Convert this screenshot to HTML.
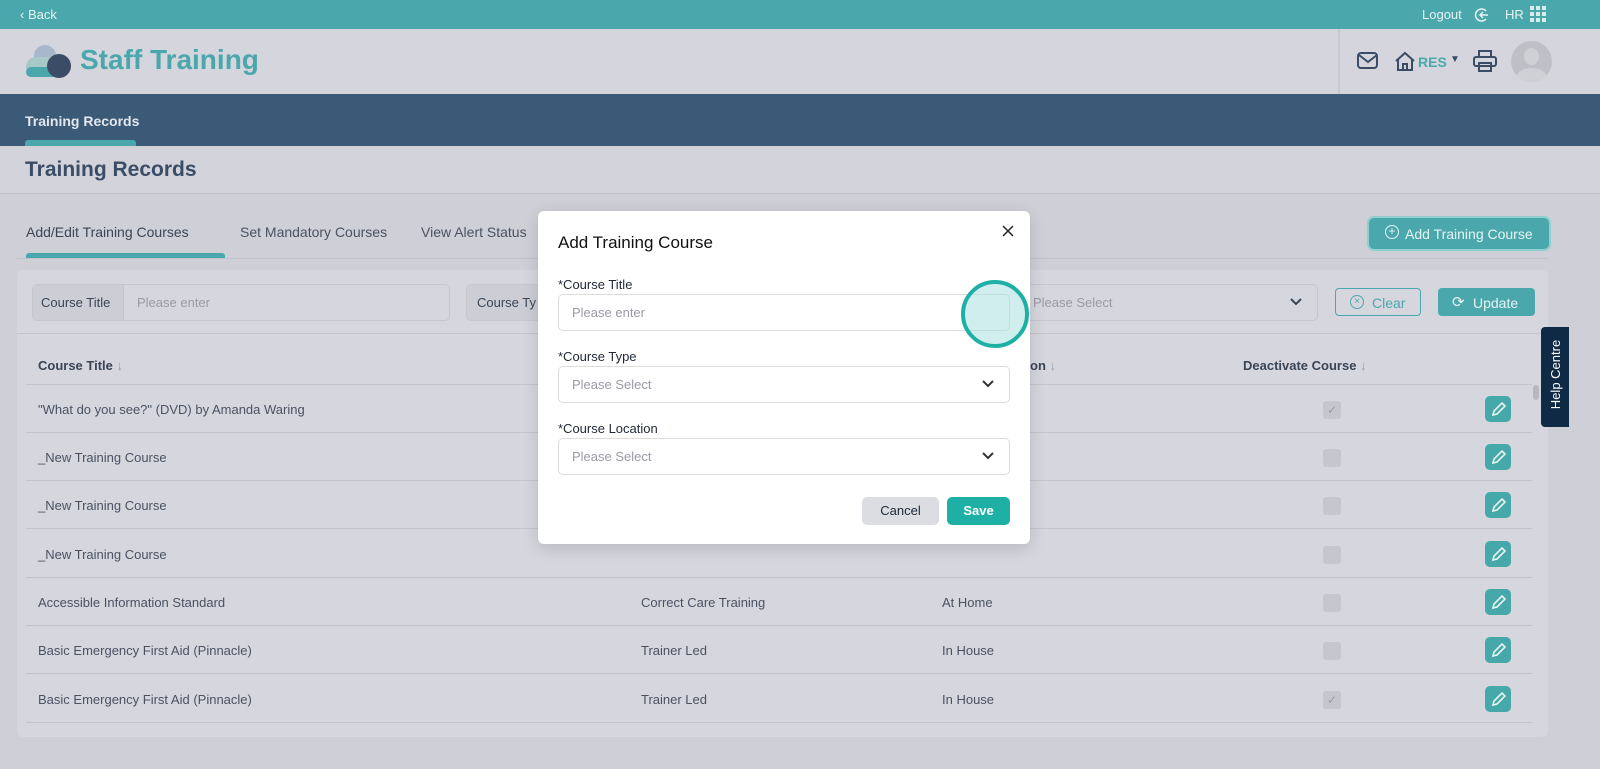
<!DOCTYPE html>
<html><head><meta charset="utf-8"><style>
*{box-sizing:border-box;margin:0;padding:0}
body{width:1600px;height:769px;overflow:hidden;background:#cfcfd7;font-family:"Liberation Sans",sans-serif;position:relative;color:#3a4556}
.abs{position:absolute}
.top{left:0;top:0;width:1600px;height:29px;background:#4aa8ac;color:#e8f3f3;font-size:13px}
.hdr{left:0;top:29px;width:1600px;height:65px;background:#d5d5dd}
.nav{left:0;top:94px;width:1600px;height:52px;background:#3b5a78}
.band{left:0;top:146px;width:1600px;height:48px;background:#d3d3db;border-bottom:1px solid #c2c2cc}
.card{left:17px;top:270px;width:1531px;height:467px;background:#d6d6de;border-radius:6px}
.row{left:26px;width:1506px;height:48px;border-bottom:1px solid #c4c4ce;font-size:13px;color:#4a5262}
.row span{position:absolute;top:17px}
.cb{position:absolute;left:1297px;top:16px;width:18px;height:18px;background:#c6c6cf;border-radius:3px;color:#9a9aa5;font-size:12px;text-align:center;line-height:18px}
.ed{position:absolute;left:1459px;top:11px;width:26px;height:26px;background:#46a8a9;border-radius:5px}
.modal{left:538px;top:211px;width:492px;height:333px;background:#fff;border-radius:6px;box-shadow:0 4px 16px rgba(0,0,0,.15)}
.lbl{position:absolute;left:20px;font-size:13px;color:#1f2937}
.inp{position:absolute;left:20px;width:452px;height:37px;border:1px solid #dcdcdc;border-radius:5px;font-size:13px;color:#9a9aa5;padding:10px 13px}
.chev{position:absolute;right:14px;top:12px}
</style></head><body>
<div class="abs top"><span class="abs" style="left:20px;top:7px">‹ Back</span>
<span class="abs" style="left:1422px;top:7px">Logout</span>
<svg class="abs" style="left:1474px;top:7px" width="16" height="16" viewBox="0 0 16 16" fill="none" stroke="#e8f3f3" stroke-width="1.5"><path d="M12 4A6 6 0 1 0 12 12"/><path d="M6 8h8M9 5l-3 3 3 3"/></svg>
<span class="abs" style="left:1505px;top:7px">HR</span>
<div class="abs" style="left:1530px;top:6px;width:16px;height:16px;background:repeating-linear-gradient(90deg,#d8ecec 0 4px,transparent 4px 6px);-webkit-mask:repeating-linear-gradient(#000 0 4px,transparent 4px 6px)"></div></div>
<div class="abs hdr">
<svg class="abs" style="left:24px;top:14px" width="48" height="36"><circle cx="21" cy="13" r="11" fill="#a7b8cc"/><rect x="2" y="14" width="36" height="20" rx="10" fill="#a9c9c9"/><rect x="2" y="24" width="36" height="10" rx="5" fill="#4aa8ac"/><circle cx="35" cy="23" r="12" fill="#3b4d66"/></svg>
<span class="abs" style="left:80px;top:15px;font-size:28px;font-weight:bold;color:#4aa8ac">Staff Training</span>
<div class="abs" style="left:1338px;top:0;width:2px;height:65px;background:#c8c8d0"></div>
<svg class="abs" style="left:1357px;top:22px" width="22" height="20" fill="none" stroke="#3b4d66" stroke-width="2"><rect x="1" y="2" width="19" height="15" rx="3"/><path d="M2 4l9 7 9-7"/></svg>
<svg class="abs" style="left:1394px;top:21px" width="22" height="22" fill="none" stroke="#3b4d66" stroke-width="2"><path d="M2 11L11 3l9 8M4 9v11h14V9M9 20v-6h4v6"/></svg>
<span class="abs" style="left:1418px;top:25px;font-size:14px;font-weight:bold;color:#4aa8ac">RES</span>
<span class="abs" style="left:1450px;top:25px;font-size:10px;color:#3b4d66">▼</span>
<svg class="abs" style="left:1473px;top:21px" width="24" height="22" fill="none" stroke="#3b4d66" stroke-width="2"><rect x="6" y="1" width="12" height="6"/><rect x="1" y="7" width="22" height="9" rx="2"/><rect x="6" y="13" width="12" height="8"/></svg>
<div class="abs" style="left:1511px;top:12px;width:41px;height:41px;border-radius:50%;background:#bfbfc7;overflow:hidden"><div class="abs" style="left:13px;top:7px;width:15px;height:17px;border-radius:50%;background:#cfcfd6"></div><div class="abs" style="left:5px;top:27px;width:31px;height:20px;border-radius:50%;background:#cfcfd6"></div></div>
</div>
<div class="abs nav"><span class="abs" style="left:25px;top:19px;color:#e3e7ee;font-size:14px;font-weight:bold">Training Records</span><div class="abs" style="left:25px;top:46px;width:111px;height:6px;background:#4aa8ac;border-radius:3px 3px 0 0"></div></div>
<div class="abs band"><span class="abs" style="left:25px;top:12px;font-size:21px;font-weight:bold;color:#3b4d66">Training Records</span></div>
<div class="abs" style="left:26px;top:224px;font-size:14px;color:#3a4556">Add/Edit Training Courses</div>
<div class="abs" style="left:240px;top:224px;font-size:14px;color:#4a5262">Set Mandatory Courses</div>
<div class="abs" style="left:421px;top:224px;font-size:14px;color:#4a5262">View Alert Status</div>
<div class="abs" style="left:26px;top:253px;width:199px;height:5px;background:#4aa8ac;border-radius:3px 3px 0 0"></div>
<div class="abs" style="left:17px;top:258px;width:1531px;height:1px;background:#c2c2cc"></div>
<div class="abs" style="left:1369px;top:218px;width:180px;height:31px;border-radius:5px;background:#4aa8ac;box-shadow:0 0 0 2px #8fcfcf;color:#e8f4f4;font-size:14px;padding:8px 0 0 36px">Add Training Course<span class="abs" style="left:16px;top:7px;width:14px;height:14px;border:1.5px solid #e8f4f4;border-radius:50%;font-size:12px;line-height:11px;text-align:center">+</span></div>
<div class="abs card"></div>
<div class="abs" style="left:32px;top:284px;width:418px;height:37px;border:1px solid #c6c6cf;border-radius:5px;font-size:13px"><div class="abs" style="left:0;top:0;width:91px;height:35px;background:#cdcdd5;border-right:1px solid #c6c6cf;padding:10px 0 0 8px">Course Title</div><span class="abs" style="left:104px;top:10px;color:#9a9aa5">Please enter</span></div>
<div class="abs" style="left:466px;top:284px;width:80px;height:37px;border:1px solid #c6c6cf;border-radius:5px;background:#cdcdd5;font-size:13px;padding:10px 0 0 10px">Course Ty</div>
<div class="abs" style="left:1020px;top:284px;width:298px;height:37px;border:1px solid #c6c6cf;border-radius:5px;font-size:13px;color:#9a9aa5;padding:10px 0 0 12px">Please Select<svg class="chev" style="right:14px;top:12px" width="14" height="10" fill="none" stroke="#3a4556" stroke-width="2"><path d="M2 2l5 5 5-5"/></svg></div>
<div class="abs" style="left:1335px;top:288px;width:86px;height:28px;border:1px solid #4aa8ac;border-radius:4px;color:#4aa8ac;font-size:14px;padding:6px 0 0 36px">Clear<span class="abs" style="left:14px;top:6px;width:14px;height:14px;border:1.5px solid #4aa8ac;border-radius:50%;font-size:10px;line-height:11px;text-align:center">×</span></div>
<div class="abs" style="left:1438px;top:288px;width:97px;height:28px;background:#4aa8ac;border-radius:4px;color:#e8f4f4;font-size:14px;padding:7px 0 0 35px">Update<span class="abs" style="left:14px;top:5px;font-size:15px">⟳</span></div>
<div class="abs" style="left:17px;top:333px;width:1531px;height:1px;background:#c4c4ce"></div>
<div class="abs" style="left:38px;top:358px;font-size:13px;font-weight:bold;color:#3a4556">Course Title <span style="color:#9a9aa5;font-weight:normal">↓</span></div>
<div class="abs" style="left:1030px;top:358px;font-size:13px;font-weight:bold;color:#3a4556">on <span style="color:#9a9aa5;font-weight:normal">↓</span></div>
<div class="abs" style="left:1243px;top:358px;font-size:13px;font-weight:bold;color:#3a4556">Deactivate Course <span style="color:#9a9aa5;font-weight:normal">↓</span></div>
<div class="abs" style="left:26px;top:384px;width:1506px;height:1px;background:#c4c4ce"></div>
<div class="abs" style="left:1533px;top:385px;width:6px;height:15px;background:#b8b8c0;border-radius:3px"></div>

<div class="abs row" style="top:385px"><span style="left:12px">"What do you see?" (DVD) by Amanda Waring</span><div class="cb">✓</div><div class="ed"><svg width="26" height="26" fill="none" stroke="#e8f4f4" stroke-width="1.6"><path d="M8 19l1-4 8-8 3 3-8 8z"/></svg></div></div>
<div class="abs row" style="top:433px"><span style="left:12px">_New Training Course</span><div class="cb"></div><div class="ed"><svg width="26" height="26" fill="none" stroke="#e8f4f4" stroke-width="1.6"><path d="M8 19l1-4 8-8 3 3-8 8z"/></svg></div></div>
<div class="abs row" style="top:481px"><span style="left:12px">_New Training Course</span><div class="cb"></div><div class="ed"><svg width="26" height="26" fill="none" stroke="#e8f4f4" stroke-width="1.6"><path d="M8 19l1-4 8-8 3 3-8 8z"/></svg></div></div>
<div class="abs row" style="top:530px"><span style="left:12px">_New Training Course</span><div class="cb"></div><div class="ed"><svg width="26" height="26" fill="none" stroke="#e8f4f4" stroke-width="1.6"><path d="M8 19l1-4 8-8 3 3-8 8z"/></svg></div></div>
<div class="abs row" style="top:578px"><span style="left:12px">Accessible Information Standard</span><span style="left:615px">Correct Care Training</span><span style="left:916px">At Home</span><div class="cb"></div><div class="ed"><svg width="26" height="26" fill="none" stroke="#e8f4f4" stroke-width="1.6"><path d="M8 19l1-4 8-8 3 3-8 8z"/></svg></div></div>
<div class="abs row" style="top:626px"><span style="left:12px">Basic Emergency First Aid (Pinnacle)</span><span style="left:615px">Trainer Led</span><span style="left:916px">In House</span><div class="cb"></div><div class="ed"><svg width="26" height="26" fill="none" stroke="#e8f4f4" stroke-width="1.6"><path d="M8 19l1-4 8-8 3 3-8 8z"/></svg></div></div>
<div class="abs row" style="top:675px"><span style="left:12px">Basic Emergency First Aid (Pinnacle)</span><span style="left:615px">Trainer Led</span><span style="left:916px">In House</span><div class="cb">✓</div><div class="ed"><svg width="26" height="26" fill="none" stroke="#e8f4f4" stroke-width="1.6"><path d="M8 19l1-4 8-8 3 3-8 8z"/></svg></div></div>

<div class="abs" style="left:1541px;top:327px;width:28px;height:100px;background:#0f2a44;border-radius:4px 0 0 4px"><span class="abs" style="left:-28px;top:40px;width:85px;transform:rotate(-90deg);color:#fff;font-size:13px;text-align:center">Help Centre</span></div>

<div class="abs modal">
<div class="abs" style="left:20px;top:22px;font-size:17px;color:#111">Add Training Course</div>
<svg class="abs" style="left:464px;top:14px" width="12" height="12" stroke="#222" stroke-width="1.5"><path d="M1 1l10 10M11 1L1 11"/></svg>
<div class="lbl" style="top:66px">*Course Title</div>
<div class="inp" style="top:83px">Please enter</div>
<div class="lbl" style="top:138px">*Course Type</div>
<div class="inp" style="top:155px">Please Select<svg class="chev" width="14" height="10" fill="none" stroke="#333" stroke-width="2"><path d="M2 2l5 5 5-5"/></svg></div>
<div class="lbl" style="top:210px">*Course Location</div>
<div class="inp" style="top:227px">Please Select<svg class="chev" width="14" height="10" fill="none" stroke="#333" stroke-width="2"><path d="M2 2l5 5 5-5"/></svg></div>
<div class="abs" style="left:324px;top:286px;width:77px;height:28px;background:#dcdce3;border-radius:5px;font-size:13px;color:#1f2937;text-align:center;line-height:28px">Cancel</div>
<div class="abs" style="left:409px;top:286px;width:63px;height:28px;background:#1fb0a5;border-radius:5px;font-size:13px;font-weight:bold;color:#fff;text-align:center;line-height:28px">Save</div>
</div>
<div class="abs" style="left:961px;top:280px;width:68px;height:68px;border-radius:50%;border:4px solid #1fb0a5;background:rgba(160,222,220,.5)"></div>
</body></html>
